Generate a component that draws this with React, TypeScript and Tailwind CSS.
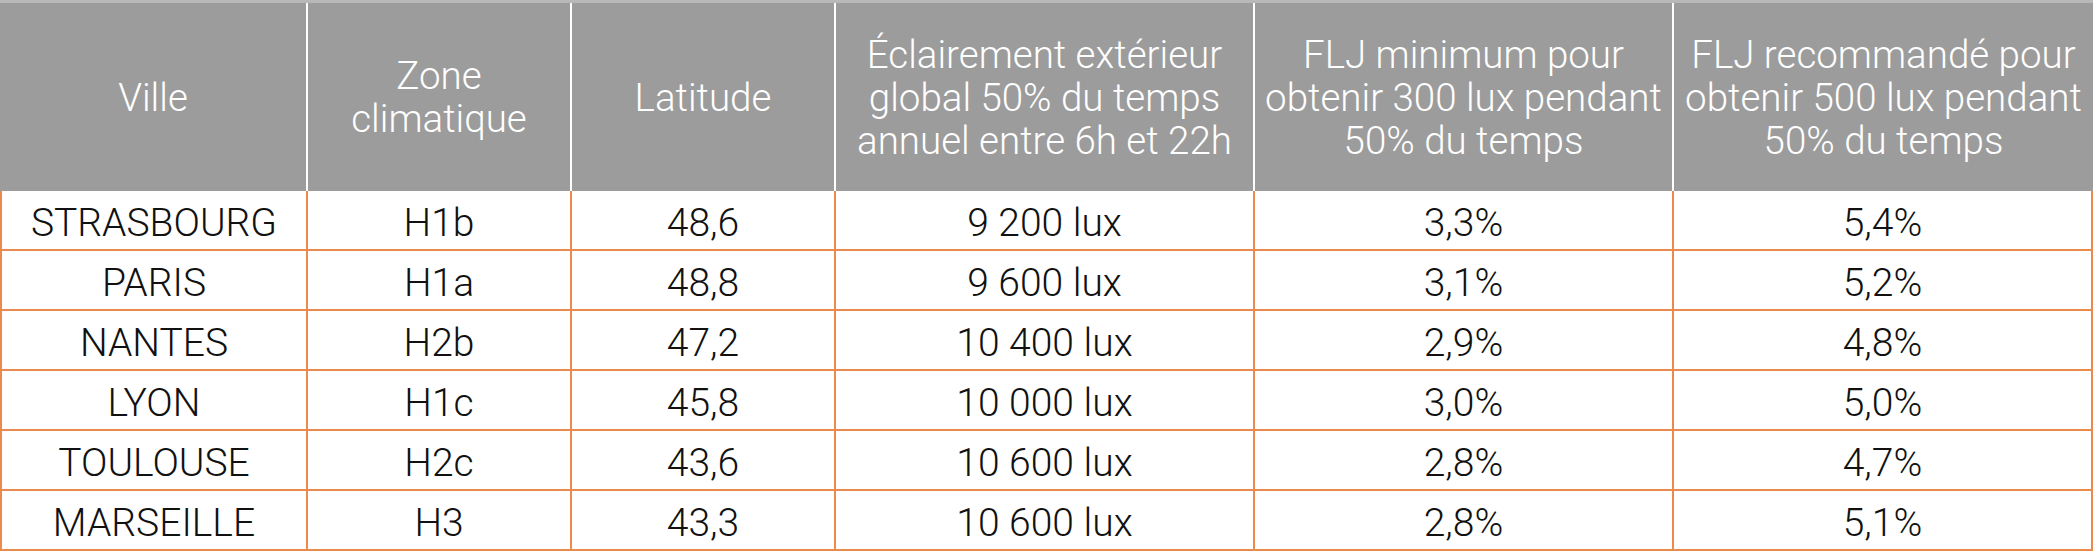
import React from "react";

const header = [
  ["Ville"],
  ["Zone", "climatique"],
  ["Latitude"],
  ["Éclairement extérieur", "global 50% du temps", "annuel entre 6h et 22h"],
  ["FLJ minimum pour", "obtenir 300 lux pendant", "50% du temps"],
  ["FLJ recommandé pour", "obtenir 500 lux pendant", "50% du temps"],
];

const rows = [
  ["STRASBOURG", "H1b", "48,6", "9 200 lux", "3,3%", "5,4%"],
  ["PARIS", "H1a", "48,8", "9 600 lux", "3,1%", "5,2%"],
  ["NANTES", "H2b", "47,2", "10 400 lux", "2,9%", "4,8%"],
  ["LYON", "H1c", "45,8", "10 000 lux", "3,0%", "5,0%"],
  ["TOULOUSE", "H2c", "43,6", "10 600 lux", "2,8%", "4,7%"],
  ["MARSEILLE", "H3", "43,3", "10 600 lux", "2,8%", "5,1%"],
];

export default function App() {
  return (
    <div
      className="w-[2093px] h-[552px] bg-white overflow-hidden"
      style={{ fontFamily: "Roboto, 'Liberation Sans', sans-serif" }}
    >
      <div className="grid grid-cols-[306px_264px_264px_419px_419px_421px] h-[191px] bg-[#9c9c9c] border-t-[3px] border-[#b8b8b8]">
        {header.map((lines, i) => (
          <div
            key={i}
            className={`flex flex-col items-center justify-center text-center text-white font-light text-[38.5px] leading-[43px] ${
              i > 0 ? "border-l-2 border-white" : ""
            }`}
          >
            {lines.map((l, j) => (
              <span key={j} className="whitespace-nowrap">{l}</span>
            ))}
          </div>
        ))}
      </div>
      {rows.map((r, ri) => (
        <div
          key={ri}
          className="grid grid-cols-[306px_264px_264px_419px_419px_421px] h-[60px] border-b-2 border-[#ec8a4d]"
        >
          {r.map((c, ci) => (
            <div
              key={ci}
              className={`flex items-center justify-center pt-[6px] text-[39px] font-light text-[#111] leading-none border-l-2 border-[#ec8a4d] ${
                ci === 5 ? "border-r-2" : ""
              }`}
            >
              {c}
            </div>
          ))}
        </div>
      ))}
    </div>
  );
}
